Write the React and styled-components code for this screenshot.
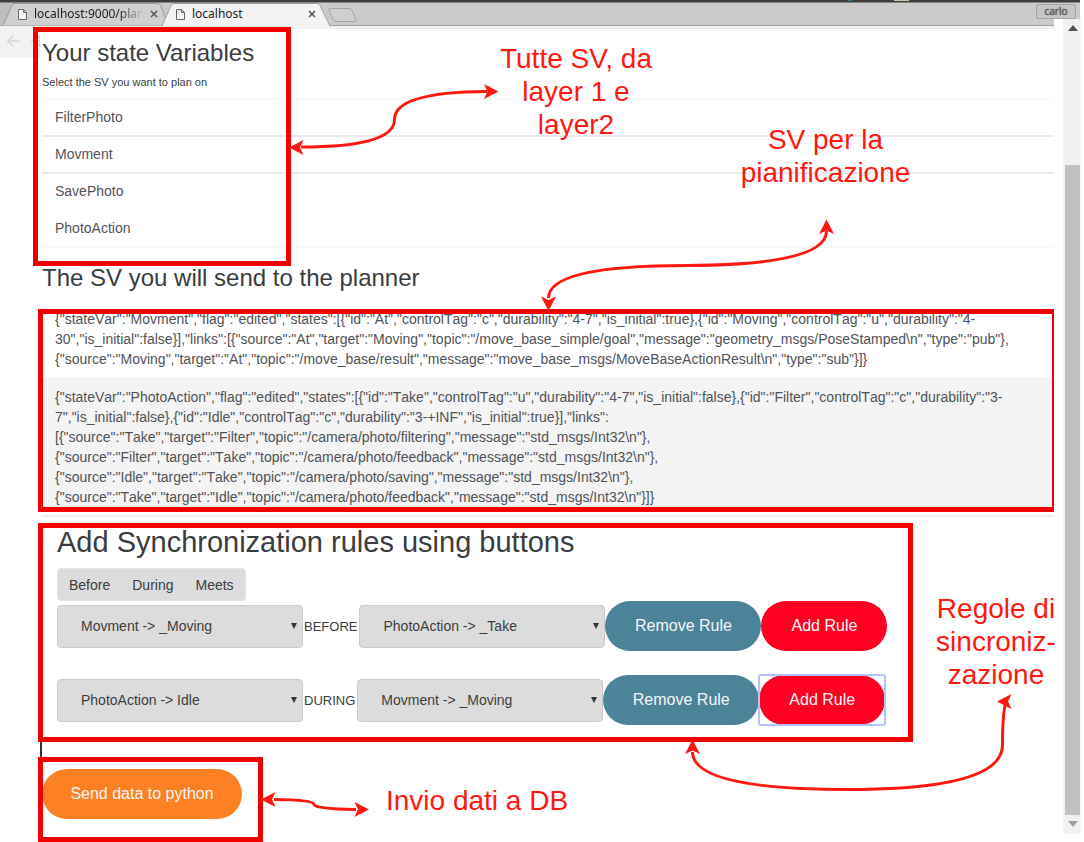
import React from "react";
import styled, { createGlobalStyle } from "styled-components";

const GlobalStyle = createGlobalStyle`
  * { box-sizing: border-box; }
  body {
    margin: 0;
    background: #fff;
    color: #3a3d40;
    font-family: "Liberation Sans", Arial, sans-serif;
    font-size: 14px;
  }
  button, select { font-family: inherit; margin: 0; cursor: pointer; }
`;

const red = "#ff1710";
const frameRed = "#f20000";

const Page = styled.div`
  position: relative;
  min-height: 100vh;
  overflow: hidden;
`;

/* ---------- browser chrome ---------- */

const BrowserTop = styled.header`
  margin-right: 4px;
`;

const DesktopStrip = styled.div`
  height: 3px;
  background: linear-gradient(#3f3d38 0 2px, #85847f 2px 3px);
  display: flex;
  justify-content: flex-end;
  gap: 42px;
  padding-right: 171px;
`;

const StripMark = styled.span`
  width: ${(p) => p.$width}px;
  height: 1px;
  background: ${(p) => p.$color};
`;

const TabStrip = styled.div`
  position: relative;
  display: flex;
  align-items: center;
  height: 23px;
  background: #cbcbcb;
  border-bottom: 1px solid #a0a0a0;
  font-family: "Noto Sans", sans-serif;
  font-size: 12px;
  color: #1c1c1c;
`;

const TabShapes = styled.svg`
  position: absolute;
  left: 0;
  top: 0;
`;

const Tab = styled.div`
  position: relative;
  display: flex;
  align-items: center;
  width: ${(p) => p.$width}px;
  padding-left: 18px;
  gap: 7px;
  height: 22px;
`;

const TabLink = styled.a`
  flex: 1;
  overflow: hidden;
  white-space: nowrap;
  line-height: 20px;
  color: inherit;
  text-decoration: none;
  mask-image: ${(p) => (p.$faded ? "linear-gradient(90deg, #000 78%, transparent)" : "none")};
`;

const IconButton = styled.button`
  display: flex;
  padding: 0;
  border: 0;
  background: none;
`;

const UserButton = styled.button`
  position: relative;
  width: 40px;
  height: 15px;
  margin: 0 4px 5px auto;
  padding: 0;
  border: 1px solid #a5a5a5;
  border-radius: 2px;
  background: #c6c6c6;
  color: #666;
  font-size: 10px;
  line-height: 13px;
  text-shadow: 0 0 1px #333;
`;

const ToolbarEdge = styled.div`
  height: 3px;
  margin-right: 26px;
  background: #f1f1f1;
`;

const ScrollTrack = styled.div`
  position: absolute;
  top: 19px;
  right: 3px;
  bottom: 8px;
  width: 27px;
  border-left: 9px solid #fff;
  background: #f1f1f1;
  display: flex;
  flex-direction: column;
  align-items: center;
  padding: 6px 1px 7px 2px;
`;

const ScrollThumb = styled.div`
  flex: 1;
  width: 15px;
  margin: 134px 0 6px;
  background: #c1c1c1;
`;

const ScrollArrow = styled.svg`
  display: block;
`;

/* ---------- page ---------- */

const Body = styled.div`
  display: flex;
  align-items: flex-start;
  margin-right: 30px;
`;

const NavRemains = styled.nav`
  flex: none;
  width: 40px;
  height: 29px;
  padding: 5px 0 0 7px;
  display: flex;
  gap: 11px;
  align-items: flex-start;
  overflow: hidden;
  background: #f2f2f2;
`;

const Content = styled.main`
  flex: 1;
  min-width: 0;
`;

const Panel = styled.section`
  padding: ${(p) => p.$top}px 0 0 2px;
`;

const Title = styled.h2`
  margin: 0;
  font-weight: 400;
  font-size: 24px;
  line-height: 32px;
`;

const Hint = styled.p`
  margin: 5px 0 8px;
  font-size: 11px;
  line-height: 16px;
`;

const VariableList = styled.ul`
  list-style: none;
  margin: 0;
  padding: 0;
  border-top: 2px solid #fafafa;
`;

const Variable = styled.li`
  padding-left: 13px;
  color: #505357;
  line-height: 35px;
  border-bottom: 2px solid ${(p) => (p.$strong ? "#ebebeb" : p.$last ? "#fafafa" : "transparent")};
`;

const PlanList = styled.div`
  margin-top: 15px;
  padding-bottom: 4px;
  border-bottom: 2px solid #efefef;
`;

const PlanEntry = styled.div`
  padding: ${(p) => (p.$shaded ? "10px 0 4px 13px" : "0 0 8px 13px")};
  background: ${(p) => (p.$shaded ? "#f4f4f4" : "transparent")};
  color: #505357;
  font-kerning: none;
  line-height: 20px;
  white-space: nowrap;
`;

const PlanLine = styled.div``;

const RulesSection = styled.section`
  margin-top: 7px;
  padding: 0 0 32px 15px;
  border-left: 2px solid #2f3436;
`;

const RulesTitle = styled.h1`
  margin: 0 0 8px;
  font-weight: 400;
  font-size: 29px;
  line-height: 36px;
`;

const RelationGroup = styled.div`
  display: inline-flex;
  border: 1px solid #e4e4e4;
  border-radius: 4px;
  background: #dcdcdc;
`;

const RelationButton = styled.button`
  height: 31px;
  padding: 0 11px;
  border: 0;
  background: none;
  color: #3c3c3c;
  font-size: 14px;
`;

const Rules = styled.div`
  display: flex;
  flex-direction: column;
  gap: 24px;
`;

const Rule = styled.div`
  display: flex;
  align-items: center;
`;

const SelectBox = styled.span`
  position: relative;
  width: 246px;
  &::after {
    content: "";
    position: absolute;
    right: 6px;
    top: 18px;
    border: 3px solid transparent;
    border-top: 6px solid #333;
    border-bottom: 0;
    pointer-events: none;
  }
`;

const StateSelect = styled.select`
  appearance: none;
  display: block;
  width: 100%;
  height: 43px;
  padding: 0 23px;
  border: 1px solid #cbcbcb;
  border-radius: 4px;
  background: #dcdcdc;
  color: #3c3c3c;
  font-size: 14px;
`;

const Relation = styled.span`
  padding: 0 2px 0 1px;
  font-size: 13px;
`;

const Pill = styled.button`
  display: block;
  width: ${(p) => p.$width}px;
  height: 50px;
  padding: 0;
  border: 0;
  border-radius: 25px;
  background: ${(p) => p.$color};
  color: #f6f6f6;
  font-size: 16px;
`;

const FocusRing = styled.span`
  border-radius: 2px;
  outline: ${(p) => (p.$on ? "2px solid #b2c4fb" : "none")};
  outline-offset: -1px;
`;

const SendArea = styled.div`
  padding: 12px 0 22px 2px;
`;

/* ---------- annotations lying over the page ---------- */

const Frame = styled.div`
  position: absolute;
  left: ${(p) => p.$x}px;
  top: ${(p) => p.$y}px;
  width: ${(p) => (p.$w ? p.$w + "px" : "auto")};
  right: ${(p) => (p.$w ? "auto" : "30px")};
  height: ${(p) => p.$h}px;
  border: 5px solid ${frameRed};
  border-right-width: ${(p) => (p.$w ? 5 : 2)}px;
  pointer-events: none;
`;

const Note = styled.p`
  position: absolute;
  left: ${(p) => p.$x}px;
  top: ${(p) => p.$y}px;
  width: ${(p) => p.$w}px;
  margin: 0;
  color: ${red};
  font-size: 28px;
  line-height: 33px;
  text-align: center;
  white-space: pre;
  pointer-events: none;
`;

const Arrows = styled.svg`
  position: absolute;
  left: 0;
  top: 0;
  pointer-events: none;
`;

const FileIcon = () => (
  <svg width="9" height="12" viewBox="0 0 9 12" fill="#f4f4f4" stroke="#666">
    <path d="M.5 1.5h5l3 3v7h-8z M5.500 1.500v3h3" />
  </svg>
);

const CloseIcon = () => (
  <svg width="8" height="8" viewBox="0 0 8 8" stroke="#555" strokeWidth="1.500">
    <path d="M1 1l6 6M7 1L1 7" />
  </svg>
);

const NavArrow = ({ flip }) => (
  <svg width="13" height="14" viewBox="0 0 13 14" fill="none" stroke="#d6d6d6" strokeWidth="1.600">
    <path d={flip ? "M0 7h12M7 2l5 5-5 5" : "M12.500 7H1.500M6.500 1.500L1 7l5.500 5.500"} />
  </svg>
);

const variables = ["FilterPhoto", "Movment", "SavePhoto", "PhotoAction"];

const movmentPlan = [
  '{"stateVar":"Movment","flag":"edited","states":[{"id":"At","controlTag":"c","durability":"4-7","is_initial":true},{"id":"Moving","controlTag":"u","durability":"4-',
  '30","is_initial":false}],"links":[{"source":"At","target":"Moving","topic":"/move_base_simple/goal","message":"geometry_msgs/PoseStamped\\n","type":"pub"},',
  '{"source":"Moving","target":"At","topic":"/move_base/result","message":"move_base_msgs/MoveBaseActionResult\\n","type":"sub"}]}',
];

const photoPlan = [
  '{"stateVar":"PhotoAction","flag":"edited","states":[{"id":"Take","controlTag":"u","durability":"4-7","is_initial":false},{"id":"Filter","controlTag":"c","durability":"3-',
  '7","is_initial":false},{"id":"Idle","controlTag":"c","durability":"3-+INF","is_initial":true}],"links":',
  '[{"source":"Take","target":"Filter","topic":"/camera/photo/filtering","message":"std_msgs/Int32\\n"},',
  '{"source":"Filter","target":"Take","topic":"/camera/photo/feedback","message":"std_msgs/Int32\\n"},',
  '{"source":"Idle","target":"Take","topic":"/camera/photo/saving","message":"std_msgs/Int32\\n"},',
  '{"source":"Take","target":"Idle","topic":"/camera/photo/feedback","message":"std_msgs/Int32\\n"}]}',
];

const states = ["Movment -> _Moving", "PhotoAction -> _Take", "PhotoAction -> Idle"];

const rules = [
  { from: "Movment -> _Moving", relation: "BEFORE", to: "PhotoAction -> _Take" },
  { from: "PhotoAction -> Idle", relation: "DURING", to: "Movment -> _Moving", focused: true },
];

const StateChoice = ({ value, label }) => (
  <SelectBox>
    <StateSelect defaultValue={value} aria-label={label}>
      {states.map((s) => (
        <option key={s}>{s}</option>
      ))}
    </StateSelect>
  </SelectBox>
);

const HEAD = "M0 0L-14.500 7.500L-11 0L-14.500-7.500z";

export default function App() {
  return (
    <Page>
      <GlobalStyle />
      <BrowserTop>
        <DesktopStrip>
          <StripMark $width={4} $color="#2c7fa3" />
          <StripMark $width={15} $color="#c9c7b5" />
        </DesktopStrip>
        <TabStrip>
          <TabShapes width="365" height="23" viewBox="0 0 365 23">
            <path d="M0 0h12L3 22.500H0z" fill="#bdbdbd" />
            <path d="M3 22.500L13 .5H157Q160 .5 161 3L168 22.500" fill="#d0d0d0" stroke="#999" />
            <path d="M162 23L171 2.500Q172 .5 174 .5H317Q319 .5 320 2.500L330 23z" fill="#f3f3f3" stroke="#a0a0a0" />
            <path d="M163 23L163 22H329V23z" fill="#f3f3f3" />
            <path d="M330 5.500H349Q351 5.500 352 7.500L356 16.500Q357 18.500 355 18.500H336Q334 18.500 333 16.500L329 7.500Q328 5.500 330 5.500z" fill="#cfcfcf" stroke="#a5a5a5" />
          </TabShapes>
          <Tab $width={158}>
            <FileIcon />
            <TabLink href="#plan" $faded>localhost:9000/plan</TabLink>
            <IconButton aria-label="Close tab"><CloseIcon /></IconButton>
          </Tab>
          <Tab $width={158}>
            <FileIcon />
            <TabLink href="#local">localhost</TabLink>
            <IconButton aria-label="Close tab"><CloseIcon /></IconButton>
          </Tab>
          <UserButton>carlo</UserButton>
        </TabStrip>
        <ToolbarEdge />
      </BrowserTop>

      <Body>
        <NavRemains aria-label="History">
          <IconButton aria-label="Back"><NavArrow /></IconButton>
          <IconButton aria-label="Forward"><NavArrow flip /></IconButton>
        </NavRemains>
        <Content>
          <Panel $top={8}>
            <Title>Your state Variables</Title>
            <Hint>Select the SV you want to plan on</Hint>
            <VariableList>
              {variables.map((name, i) => (
                <Variable key={name} $strong={i < 2} $last={i === 3}>{name}</Variable>
              ))}
            </VariableList>
          </Panel>

          <Panel $top={14}>
            <Title>The SV you will send to the planner</Title>
            <PlanList>
              <PlanEntry>
                {movmentPlan.map((l) => <PlanLine key={l}>{l}</PlanLine>)}
              </PlanEntry>
              <PlanEntry $shaded>
                {photoPlan.map((l) => <PlanLine key={l}>{l}</PlanLine>)}
              </PlanEntry>
            </PlanList>
          </Panel>

          <RulesSection>
            <RulesTitle>Add Synchronization rules using buttons</RulesTitle>
            <RelationGroup>
              <RelationButton>Before</RelationButton>
              <RelationButton>During</RelationButton>
              <RelationButton>Meets</RelationButton>
            </RelationGroup>
            <Rules>
              {rules.map((r) => (
                <Rule key={r.relation}>
                  <StateChoice value={r.from} label="First state" />
                  <Relation>{r.relation}</Relation>
                  <StateChoice value={r.to} label="Second state" />
                  <Pill $width={156} $color="#4b8399">Remove Rule</Pill>
                  <FocusRing $on={r.focused}>
                    <Pill $width={126} $color="#ff0023">Add Rule</Pill>
                  </FocusRing>
                </Rule>
              ))}
            </Rules>
          </RulesSection>

          <SendArea>
            <Pill $width={200} $color="#fd8025">Send data to python</Pill>
          </SendArea>
        </Content>
      </Body>

      <ScrollTrack>
        <ScrollArrow width="10" height="6" viewBox="0 0 10 6"><path d="M0 6L5 0l5 6z" fill="#505050" /></ScrollArrow>
        <ScrollThumb />
        <ScrollArrow width="10" height="6" viewBox="0 0 10 6"><path d="M0 0L5 6l5-6z" fill="#a0a0a0" /></ScrollArrow>
      </ScrollTrack>

      <Frame $x={33} $y={27} $w={258} $h={239} />
      <Frame $x={38} $y={309} $h={203} />
      <Frame $x={38} $y={523} $w={875} $h={219} />
      <Frame $x={38} $y={757} $w={225} $h={85} />

      <Note $x={496} $y={42} $w={160}>{"Tutte SV, da\nlayer 1 e\nlayer2"}</Note>
      <Note $x={735} $y={123} $w={181}>{"SV per la\npianificazione"}</Note>
      <Note $x={936} $y={592} $w={120}>{"Regole di\nsincroniz-\nzazione"}</Note>
      <Note $x={386} $y={784} $w={181}>Invio dati a DB</Note>

      <Arrows width="1084" height="842" viewBox="0 0 1084 842">
        <g fill="none" stroke={red} strokeWidth="3">
          <path d="M301 147Q394.500 147 394.500 119.500Q394.500 92 487 91.500" />
          <path d="M826.500 231Q826.500 265 687 265.500Q548.500 265.500 548.500 298" />
          <path d="M274 799.500Q314 799.500 314 804.500Q314 809 356 809.500" />
          <path d="M692.500 752Q692.500 789.500 848 789.500Q1002.500 789.500 1002.500 745Q1002.500 712 1006 702" />
        </g>
        <g fill={red}>
          <path d={HEAD} transform="translate(289 147.500) rotate(180)" />
          <path d={HEAD} transform="translate(498.500 91.500)" />
          <path d={HEAD} transform="translate(826.500 219.500) rotate(-90)" />
          <path d={HEAD} transform="translate(548.500 311) rotate(90)" />
          <path d={HEAD} transform="translate(261 799.500) rotate(180)" />
          <path d={HEAD} transform="translate(369 809.500)" />
          <path d={HEAD} transform="translate(692.500 739.500) rotate(-90)" />
          <path d={HEAD} transform="translate(997 701.500) rotate(180)" />
        </g>
      </Arrows>
    </Page>
  );
}
